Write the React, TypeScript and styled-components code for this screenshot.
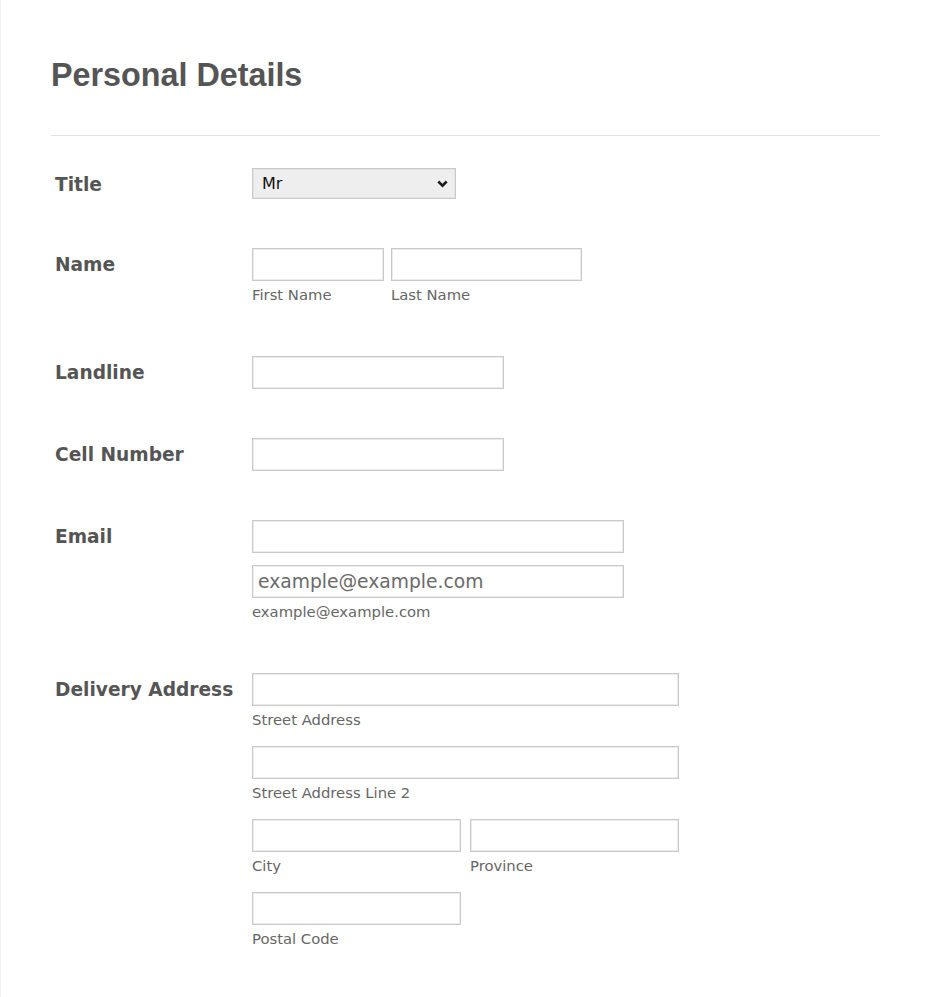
import React from 'react';
import styled, { createGlobalStyle } from 'styled-components';

const GlobalStyle = createGlobalStyle`
  body {
    margin: 0;
    background: #ffffff;
    font-family: "DejaVu Sans", Verdana, sans-serif;
  }
`;

const Page = styled.div`
  min-height: 100vh;
  box-sizing: border-box;
  border-left: 1px solid #f2f2f2;
  padding: 56px 50px 40px 50px;
`;

const Heading = styled.h1`
  margin: 0;
  font-family: "Liberation Sans", Arial, sans-serif;
  font-size: 32.3px;
  line-height: 1.2;
  font-weight: bold;
  color: #555555;
`;

const Divider = styled.hr`
  margin: 40px 0 0;
  border: none;
  border-top: 1px solid #e3e3e3;
`;

const FormList = styled.div`
  padding-top: 8px;
`;

const Row = styled.div`
  display: grid;
  grid-template-columns: 197px auto;
  padding: 24px 0 25px 4px;
`;

const Label = styled.label`
  padding-top: 2px;
  font-size: 18.6px;
  font-weight: bold;
  line-height: 29px;
  color: #555555;
`;

const Fields = styled.div<{ $gap?: number }>`
  display: flex;
  flex-direction: column;
  gap: ${(p) => p.$gap ?? 12}px;
`;

const Line = styled.div<{ $gap?: number }>`
  display: flex;
  gap: ${(p) => p.$gap ?? 7}px;
`;

const Field = styled.div`
  display: flex;
  flex-direction: column;
`;

const Input = styled.input<{ $w: number }>`
  box-sizing: border-box;
  width: ${(p) => p.$w}px;
  height: 33px;
  margin: 0;
  border: 1px solid #c9c9c9;
  box-shadow: inset 0 0 0 1px #ececec;
  background: #ffffff;
  padding: 0 5px;
  font-family: "DejaVu Sans", Verdana, sans-serif;
  font-size: 18.7px;
  color: #555555;
  outline: none;

  &::placeholder {
    color: #6a6a6a;
  }
`;

const SelectWrap = styled.div`
  position: relative;
  width: 204px;
`;

const Select = styled.select`
  box-sizing: border-box;
  display: block;
  width: 204px;
  height: 31px;
  margin: 0;
  border: 1px solid #c9c9c9;
  box-shadow: inset 0 0 0 1px #e4e4e4;
  border-radius: 0;
  background: #eeeeee;
  appearance: none;
  padding: 0 9px;
  font-family: "DejaVu Sans", Verdana, sans-serif;
  font-size: 16px;
  color: #111111;
  outline: none;
`;

const Chevron = styled.svg`
  position: absolute;
  right: 8px;
  top: 12px;
  pointer-events: none;
`;

const SubLabel = styled.span`
  margin-top: 5px;
  margin-bottom: 3px;
  font-size: 14.8px;
  line-height: 18px;
  color: #666666;
`;

export default function App() {
  return (
    <>
      <GlobalStyle />
      <Page>
        <Heading>Personal Details</Heading>
        <Divider />
        <FormList>
          <Row>
            <Label>Title</Label>
            <div>
              <SelectWrap>
                <Select defaultValue="Mr">
                  <option>Mr</option>
                  <option>Mrs</option>
                  <option>Ms</option>
                  <option>Dr</option>
                </Select>
                <Chevron width="11" height="8" viewBox="0 0 11 8">
                  <path d="M1.3 1.5 L5.5 5.6 L9.7 1.5" fill="none" stroke="#1b1b1b" strokeWidth="2.6" />
                </Chevron>
              </SelectWrap>
            </div>
          </Row>

          <Row>
            <Label>Name</Label>
            <Line>
              <Field>
                <Input $w={132} />
                <SubLabel>First Name</SubLabel>
              </Field>
              <Field>
                <Input $w={191} />
                <SubLabel>Last Name</SubLabel>
              </Field>
            </Line>
          </Row>

          <Row>
            <Label>Landline</Label>
            <div>
              <Input $w={252} />
            </div>
          </Row>

          <Row>
            <Label>Cell Number</Label>
            <div>
              <Input $w={252} />
            </div>
          </Row>

          <Row>
            <Label>Email</Label>
            <Fields>
              <Input $w={372} />
              <Field>
                <Input $w={372} placeholder="example@example.com" />
                <SubLabel>example@example.com</SubLabel>
              </Field>
            </Fields>
          </Row>

          <Row>
            <Label>Delivery Address</Label>
            <Fields $gap={14}>
              <Field>
                <Input $w={427} />
                <SubLabel>Street Address</SubLabel>
              </Field>
              <Field>
                <Input $w={427} />
                <SubLabel>Street Address Line 2</SubLabel>
              </Field>
              <Line $gap={9}>
                <Field>
                  <Input $w={209} />
                  <SubLabel>City</SubLabel>
                </Field>
                <Field>
                  <Input $w={209} />
                  <SubLabel>Province</SubLabel>
                </Field>
              </Line>
              <Field>
                <Input $w={209} />
                <SubLabel>Postal Code</SubLabel>
              </Field>
            </Fields>
          </Row>
        </FormList>
      </Page>
    </>
  );
}
